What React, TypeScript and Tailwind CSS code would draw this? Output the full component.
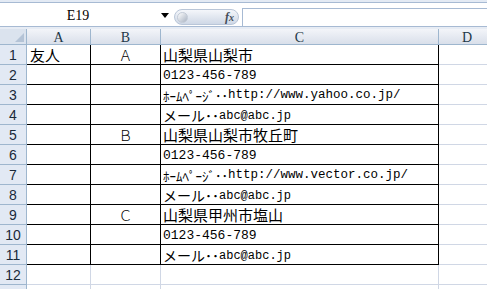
import React from "react";

const JP = '"Noto Sans CJK JP", "Noto Sans", sans-serif';
const MONO = '"Liberation Mono", "Noto Sans CJK JP", monospace';

function J({ children, size = 15 }: { children: React.ReactNode; size?: number }) {
  return <span style={{ fontFamily: JP, fontSize: size }}>{children}</span>;
}
function M({ children, size = 13 }: { children: React.ReactNode; size?: number }) {
  return <span style={{ fontFamily: MONO, fontSize: size }}>{children}</span>;
}

const addr = (t: string) => <J>{t}</J>;
const tel = <M>0123-456-789</M>;
const home = (u: string) => (
  <>
    <J size={13}>ﾎｰﾑﾍﾟｰｼﾞ･･</J>
    <M size={12.5}>{u}</M>
  </>
);
const mail = (
  <>
    <J size={14}>メール</J>
    <J size={14}>･･</J>
    <M size={12}>abc@abc.jp</M>
  </>
);

type Row = { a?: string; b?: string; c?: React.ReactNode; bordered: boolean; label?: boolean };
const rows: Row[] = [
  { a: "友人", b: "Ａ", c: addr("山梨県山梨市"), bordered: true },
  { c: tel, bordered: true },
  { c: home("http://www.yahoo.co.jp/"), bordered: true },
  { c: mail, bordered: true },
  { b: "Ｂ", c: addr("山梨県山梨市牧丘町"), bordered: true },
  { c: tel, bordered: true },
  { c: home("http://www.vector.co.jp/"), bordered: true },
  { c: mail, bordered: true },
  { b: "Ｃ", c: addr("山梨県甲州市塩山"), bordered: true },
  { c: tel, bordered: true },
  { c: mail, bordered: true },
  { bordered: false },
  { bordered: false, label: false },
];

export default function App() {
  return (
    <div className="w-[487px] h-[289px] overflow-hidden bg-white flex flex-col">
      {/* top strip */}
      <div className="h-[3px] bg-[#e3eaf4] border-b border-[#a7bad3] shrink-0" />
      {/* formula bar */}
      <div className="h-[23px] flex shrink-0 bg-white">
        <div className="w-[156px] flex items-center justify-center text-[14px] text-black pt-[1px]" style={{ fontFamily: '"Liberation Serif", serif' }}>
          E19
        </div>
        <div className="w-[18px] flex items-center justify-center pt-[1px]">
          <svg width="8" height="5" viewBox="0 0 8 5"><path d="M0 0h8L4 5z" fill="#000" /></svg>
        </div>
        <div className="w-[68px] flex items-end pb-[1px]">
          <div className="w-[65px] h-[16px] rounded-full bg-gradient-to-b from-[#f4f6fa] to-[#cfd8e6] border border-[#b9c6d8] flex items-center justify-between px-[2px]">
            <div className="w-[11px] h-[11px] rounded-full bg-gradient-to-br from-[#ffffff] to-[#a9b3c2] border border-[#c2cad6]" />
            <span className="italic text-[12px] font-bold text-[#444c58] pr-[2px]" style={{ fontFamily: '"Liberation Serif", serif' }}>
              f<span className="text-[10px]">x</span>
            </span>
          </div>
        </div>
        <div className="flex-1 mt-[5px] border-l border-t border-[#a7bad3] bg-white" />
      </div>
      {/* gap */}
      <div className="h-[3px] bg-[#e7ecf4] border-t border-[#a7bad3] shrink-0" />
      {/* column headers */}
      <div className="h-[16px] flex shrink-0 border-b border-[#9eb6ce] bg-gradient-to-b from-[#f3f5f9] to-[#d9dfea] text-[14px] text-[#1d3848]" style={{ fontFamily: '"Liberation Serif", serif' }}>
        <div className="w-[27px] border-r border-[#9eb6ce] relative bg-[#dbe3ee]">
          <svg className="absolute right-[2px] bottom-[2px]" width="9" height="9" viewBox="0 0 9 9"><path d="M9 0v9H0z" fill="#b4c3d6" /></svg>
        </div>
        <div className="w-[64px] border-r border-[#9eb6ce] flex items-center justify-center pt-[1px]">A</div>
        <div className="w-[70px] border-r border-[#9eb6ce] flex items-center justify-center pt-[1px]">B</div>
        <div className="w-[278px] border-r border-[#9eb6ce] flex items-center justify-center pt-[1px]">C</div>
        <div className="flex-1 flex items-center justify-center pl-[8px] pt-[1px]">D</div>
      </div>
      {/* rows */}
      {rows.map((r, i) => {
        const bc = r.bordered ? "border-black" : "border-[#d0d7e5]";
        return (
          <div key={i} className="h-[20px] flex shrink-0">
            <div className="w-[27px] border-r border-b border-[#9eb6ce] bg-[#e2e9f4] flex items-center justify-center text-[14px] text-[#1a2a3a] pt-[2px]" style={{ fontFamily: '"Liberation Sans", sans-serif' }}>
              {r.label === false ? "" : i + 1}
            </div>
            <div className={`w-[64px] border-r border-b ${bc} flex items-center pl-[3px] pt-[2px] text-[15px] text-black`} style={{ fontFamily: JP }}>
              {r.a}
            </div>
            <div className={`w-[70px] border-r border-b ${bc} flex items-center justify-center pt-[2px] text-[14px] text-black font-light`} style={{ fontFamily: JP }}>
              {r.b}
            </div>
            <div className={`w-[278px] border-r border-b ${bc} flex items-center pl-[2px] pt-[2px] text-black whitespace-nowrap overflow-hidden`}>
              {r.c}
            </div>
            <div className="flex-1 border-b border-[#d0d7e5]" />
          </div>
        );
      })}
    </div>
  );
}
